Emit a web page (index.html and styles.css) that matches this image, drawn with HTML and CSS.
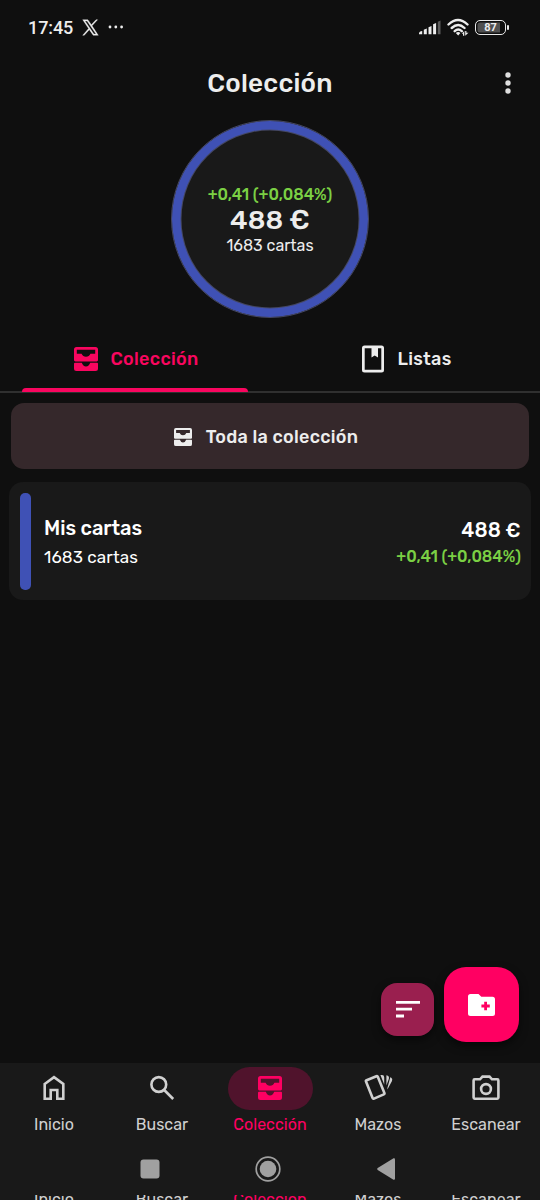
FILE: index.html
```html
<!DOCTYPE html>
<html lang="es">
<head>
<meta charset="utf-8">
<meta name="viewport" content="width=device-width">
<title>Colección</title>
<link rel="stylesheet" href="styles.css">
</head>
<body>
<svg class="defs" aria-hidden="true">
  <symbol id="inbox" viewBox="0 0 24 24"><path fill-rule="evenodd" d="M2.5 0H21.5Q24 0 24 2.5V13Q24 14.4 22.6 14.4H1.4Q0 14.4 0 13V2.5Q0 0 2.5 0ZM2.8 2.8V6.8H7.6Q8.8 9.8 12 9.8T16.4 6.8H21.2V2.8Z"/><path d="M1 15.8H7.8Q9 19.4 12 19.4T16.2 15.8H23Q24 15.8 24 16.8V21.5Q24 24 21.5 24H2.5Q0 24 0 21.5V16.8Q0 15.8 1 15.8Z"/></symbol>
</svg>
<div class="phone">
  <header class="status">
    <time class="clock">17:45</time>
    <svg class="x-logo" viewBox="0 0 24 24"><path fill-rule="evenodd" d="M1 1H8.2L13.2 8.1 19.8 1H22L14.2 9.6 23 23H15.8L10.3 15 3.2 23H1L9.3 13.5ZM4.2 2.8 16.8 21.3H19.8L7.2 2.8Z"/></svg>
    <svg class="more" viewBox="0 0 16 4"><circle cx="2" cy="2" r="1.4"/><circle cx="7.8" cy="2" r="1.4"/><circle cx="13.6" cy="2" r="1.4"/></svg>
    <svg class="signal" viewBox="0 0 22 16"><path d="M0 15.2Q-.2 12.2 3.2 12V15.2ZM4.8 10.7 7.8 9.5V15.2H4.8ZM9.5 8.2 12.5 7V15.2H9.5ZM14.1 5.2 17.1 4V15.2H14.1Z"/><path class="dim" d="M18.8 2.7 21.5 1.5V15.2H18.8Z"/></svg>
    <svg class="wifi" viewBox="0 0 24 19"><path class="arc" d="M1.5 6.5Q11 -2.5 20.5 6.5M4.7 10Q11.2 4 17.5 10M7.7 13.2Q11.2 10 14.8 13.2"/><path d="M8.8 15Q11.2 13.2 13.4 15L11.2 17.6ZM14.8 15.8 17.3 13V17.8H16V15.8ZM18.2 13H19.4V14.8H21.5L18.2 17.8Z"/></svg>
    <span class="battery">87</span>
  </header>

  <div class="appbar">
    <h1 class="title">Colección</h1>
    <svg class="kebab" viewBox="0 0 6 24"><circle cx="3" cy="4" r="2.7"/><circle cx="3" cy="12" r="2.7"/><circle cx="3" cy="20" r="2.7"/></svg>
  </div>

  <section class="ring">
    <span class="gain">+0,41 (+0,084%)</span>
    <strong class="total">488 €</strong>
    <span class="cards">1683 cartas</span>
  </section>

  <nav class="tabs">
    <a class="tab active"><svg class="tab-inbox"><use href="#inbox"/></svg><span class="tab-name">Colección</span></a>
    <a class="tab"><svg class="book" viewBox="0 0 22 28"><path fill-rule="evenodd" d="M2.5 .5H19.5Q22 .5 22 3V25Q22 27.5 19.5 27.5H2.5Q0 27.5 0 25V3Q0 .5 2.5 .5ZM2.7 3.2V24.8H19.3V3.2H16V12.5L12.7 10.6 9.5 12.5V3.2Z"/></svg><span class="tab-name">Listas</span></a>
  </nav>

  <main class="content">
    <button class="all"><svg class="all-inbox"><use href="#inbox"/></svg><span>Toda la colección</span></button>
    <article class="card">
      <span class="stripe"></span>
      <div class="info"><strong class="name">Mis cartas</strong><span class="count">1683 cartas</span></div>
      <div class="value"><strong class="price">488 €</strong><span class="gain">+0,41 (+0,084%)</span></div>
    </article>
  </main>

  <div class="actions">
    <button class="sort"><svg class="sort-icon" viewBox="0 0 24 17"><path d="M0 0H24V2.8H0ZM0 6.8H16V9.6H0ZM0 13.6H8V16.4H0Z"/></svg></button>
    <button class="add"><svg class="folder" viewBox="0 0 27 22"><path fill-rule="evenodd" d="M2.5 0H10.5L13.3 2.8H24.5Q27 2.8 27 5.3V19.5Q27 22 24.5 22H2.5Q0 22 0 19.5V2.5Q0 0 2.5 0ZM16.2 7.8V10.6H13.4V13.4H16.2V16.2H19V13.4H21.8V10.6H19V7.8Z"/></svg></button>
  </div>

  <nav class="bottom">
    <a class="item"><span class="pill"><svg class="nav-icon" viewBox="0 0 32 32"><path class="line" d="M6.7 12 16 5.2 25.3 12V26.7H19.3V18H12.7V26.7H6.7Z"/></svg></span><span class="label">Inicio</span></a>
    <a class="item"><span class="pill"><svg class="nav-icon" viewBox="0 0 32 32"><circle class="line" cx="12.8" cy="12.5" r="7.4"/><path class="line" d="M18.2 18 27.2 27"/></svg></span><span class="label">Buscar</span></a>
    <a class="item current"><span class="pill"><svg class="nav-inbox"><use href="#inbox"/></svg></span><span class="label">Colección</span></a>
    <a class="item"><span class="pill"><svg class="nav-icon" viewBox="0 0 32 32"><path class="line" d="M4.6 8.2 14.4 4.2Q15.4 3.8 15.8 4.8L22.4 21Q22.8 22 21.8 22.4L12 26.6Q11 27 10.6 26L4 9.6Q3.6 8.6 4.6 8.2Z"/><path d="M18.4 3H20Q22.2 3 22.2 5.2V12.4ZM24.4 3.2 25.2 3.6Q27.6 4.6 26.8 7L24.4 13.5Z M25.4 17.5V16L28.3 5.2 29 5.6Q31 6.8 30 9Z"/></svg></span><span class="label">Mazos</span></a>
    <a class="item"><span class="pill"><svg class="nav-icon" viewBox="0 0 32 32"><path class="line" d="M4.7 7.3H10L12.5 4.6H19.5L22 7.3H27.3Q28.4 7.3 28.4 8.4V25.6Q28.4 26.7 27.3 26.7H4.7Q3.6 26.7 3.6 25.6V8.4Q3.6 7.3 4.7 7.3Z"/><circle class="line" cx="16" cy="17" r="4.9"/></svg></span><span class="label">Escanear</span></a>
  </nav>

  <footer class="system">
    <svg class="sys-icon" viewBox="0 0 28 28"><rect x="4.5" y="4.5" width="19" height="19" rx="3"/></svg>
    <svg class="sys-icon" viewBox="0 0 28 28"><circle class="halo" cx="14" cy="14" r="11.8"/><circle cx="14" cy="14" r="8.3"/></svg>
    <svg class="sys-icon" viewBox="0 0 28 28"><path d="M5.7 13 21.5 3.3Q23 2.8 23 4.5V23.5Q23 25.2 21.5 24.7L5.7 15Q4.5 14 5.7 13Z"/></svg>
  </footer>
  <div class="echo" aria-hidden="true"><span class="label">Inicio</span><span class="label">Buscar</span><span class="label pink">Colección</span><span class="label">Mazos</span><span class="label">Escanear</span></div>
</div>
</body>
</html>
```
FILE: styles.css
```css
* { box-sizing: border-box; }
body { margin: 0; background: #0f0f0f; color: #ededed; font-family: Rubik, Roboto, sans-serif; }
svg { display: block; flex: none; fill: currentColor; }
button { border: 0; padding: 0; color: inherit; font: inherit; }
.defs { position: absolute; width: 0; height: 0; }
.phone { width: 540px; height: 1200px; display: flex; flex-direction: column; overflow: hidden; }

.status { height: 54px; display: flex; align-items: center; padding: 0 30px 0 28px; flex: none; }
.clock { width: 47px; padding-top: 1px; font-family: Roboto, sans-serif; font-size: 18px; font-weight: 500; letter-spacing: -.1px; }
.x-logo { width: 17px; height: 17px; margin-left: 7px; stroke: currentColor; stroke-width: .5; }
.more { width: 16px; height: 4px; margin-left: 9px; }
.signal { width: 22px; height: 16px; margin-left: auto; }
.dim { opacity: .35; }
.wifi { width: 24px; height: 19px; margin: 0 4px 0 6px; }
.arc { fill: none; stroke: currentColor; stroke-width: 2.4; stroke-linecap: round; }
.battery { position: relative; width: 31px; height: 15px; margin-right: 4px; border: 1.5px solid #e8e8e8; border-radius: 5px; box-shadow: inset 0 0 0 1.5px #0f0f0f; background: linear-gradient(90deg, #505050 84%, #0f0f0f 84%); display: flex; align-items: center; justify-content: center; font-family: Roboto, sans-serif; font-size: 11px; font-weight: 700; }
.battery::after { content: ""; position: absolute; right: -4px; top: 4px; width: 2px; height: 5px; border-radius: 1px; background: #e8e8e8; }

.appbar { height: 66px; flex: none; display: grid; grid-template-columns: 1fr auto 1fr; align-items: center; padding: 0 29px 8px; }
.title { grid-column: 2; margin: 2px 0 0; font-size: 26px; font-weight: 500; letter-spacing: .25px; line-height: 30px; }
.kebab { width: 6px; height: 24px; justify-self: end; color: #dedede; }

.ring { width: 198px; height: 198px; flex: none; align-self: center; display: flex; flex-direction: column; align-items: center; justify-content: center; padding-top: 1px; border-radius: 50%; border: 1px solid #444763; background: #191919; box-shadow: inset 0 0 0 8.5px #3f51b5, inset 0 0 0 9.5px #444763; }
.gain { color: #7bd044; font-size: 16px; line-height: 22px; font-weight: 500; letter-spacing: -.03px; white-space: nowrap; }
.total { font-size: 27px; line-height: 29px; font-weight: 500; letter-spacing: 0; }
.cards { font-size: 16px; line-height: 21px; letter-spacing: 0; }

.tabs { height: 75px; flex: none; display: grid; grid-template-columns: 1fr 1fr; border-bottom: 2px solid #303030; }
.tab { position: relative; display: flex; align-items: center; justify-content: center; padding-top: 9px; font-size: 18px; font-weight: 500; letter-spacing: .3px; }
.tab:last-child { padding-left: 4px; }
.tab.active { color: #f9065f; padding-left: 3px; }
.tab.active::after { content: ""; position: absolute; left: 22px; right: 22px; bottom: -1px; height: 4px; border-radius: 4px 4px 0 0; background: #f9065f; }
.tab-inbox { width: 24px; height: 24px; margin-right: 12px; }
.book { width: 22px; height: 28px; margin-right: 13px; }

.content { flex: 1; padding: 10px 9px 0; }
.all { width: 518px; height: 66px; margin: 0 2px; border-radius: 13px; background: #35282b; display: flex; align-items: center; justify-content: center; padding: 1px 8px 0 0; font-size: 18px; font-weight: 500; letter-spacing: .28px; }
.all-inbox { width: 18px; height: 18px; margin-right: 14px; }
.card { height: 118px; margin-top: 13px; padding: 11px 10px 10px 11px; border-radius: 14px; background: #191919; color: #fff; display: flex; align-items: stretch; }
.stripe { width: 11px; border-radius: 5px; background: #3f51b5; }
.info, .value { display: flex; flex-direction: column; padding-top: 21px; }
.info { margin-left: 13px; }
.value { margin-left: auto; align-items: flex-end; padding-top: 23px; }
.name { font-size: 20px; line-height: 29px; font-weight: 500; letter-spacing: -.05px; }
.count { font-size: 17px; line-height: 28px; letter-spacing: .12px; }
.price { font-size: 20px; line-height: 28px; font-weight: 500; letter-spacing: .1px; }
.value .gain { line-height: 26px; }

.actions { display: flex; align-items: flex-end; justify-content: flex-end; gap: 10px; height: 96px; flex: none; padding: 0 21px 21px 0; }
.sort, .add { display: flex; align-items: center; justify-content: center; box-shadow: 0 4px 8px #0008; color: #fff; }
.sort { width: 53px; height: 53px; margin-bottom: 6px; border-radius: 16px; background: #9a1f4f; }
.add { width: 75px; height: 75px; border-radius: 22px; background: #ff0062; }
.sort-icon { width: 24px; height: 17px; }
.folder { width: 27px; height: 22px; }

.bottom { height: 79px; flex: none; background: #191919; display: grid; grid-template-columns: repeat(5, 1fr); padding-top: 4px; color: #d0d0d0; }
.item { display: flex; flex-direction: column; align-items: center; }
.pill { width: 85px; height: 43px; display: flex; align-items: center; justify-content: center; padding-bottom: 1px; border-radius: 22px; }
.nav-icon { width: 32px; height: 32px; }
.line { fill: none; stroke: currentColor; stroke-width: 2.6; }
.nav-inbox { width: 24px; height: 24px; }
.current { color: #ff0062; }
.current .pill { background: #50132c; }
.label { font-size: 16px; line-height: 19px; letter-spacing: .03px; text-align: center; }
.item .label { margin-top: 5px; }
.system { height: 53px; flex: none; background: #191919; color: #a0a0a0; display: flex; justify-content: center; gap: 90px; padding: 12.5px 3.5px 0 0; }
.sys-icon { width: 28px; height: 28px; }
.halo { fill: none; stroke: currentColor; stroke-width: 1.7; }
.echo { height: 5px; flex: none; background: #191919; overflow: hidden; display: grid; grid-template-columns: repeat(5, 1fr); align-items: start; color: #d0d0d0; }
.echo .label { margin-top: -5px; }
.pink { color: #ff0062; }
```
